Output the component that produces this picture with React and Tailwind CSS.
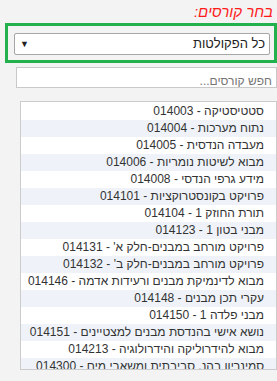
import React from "react";

const courses = [
  "סטטיסטיקה - 014003",
  "נתוח מערכות - 014004",
  "מעבדה הנדסית - 014005",
  "מבוא לשיטות נומריות - 014006",
  "מידע גרפי הנדסי - 014008",
  "פרויקט בקונסטרוקציות - 014101",
  "תורת החוזק 1 - 014104",
  "מבני בטון 1 - 014123",
  "פרויקט מורחב במבנים-חלק א' - 014131",
  "פרויקט מורחב במבנים-חלק ב' - 014132",
  "מבוא לדינמיקת מבנים ורעידות אדמה - 014146",
  "עקרי תכן מבנים - 014148",
  "מבני פלדה 1 - 014150",
  "נושא אישי בהנדסת מבנים למצטיינים - 014151",
  "מבוא להידרוליקה והידרולוגיה - 014213",
  "סמינריון בהנ. סביבתית ומשאבי מים - 014300",
];

const App = () => {
  return (
    <div
      dir="rtl"
      className="w-[277px] h-[381px] bg-[#f3f3f3] overflow-hidden font-['Liberation_Sans',Arial,sans-serif]"
    >
      <div className="h-[23px] leading-[23px] text-[15px] italic text-[#ff1a1a] pr-[4px] text-right">
        בחר קורסים:
      </div>

      <div dir="ltr" className="ml-[5px] w-[272px] h-[40px] border-[3px] border-[#22b14c] pt-[7px] pl-[6px] pr-[4px]">
        <div className="h-[22px] bg-white border border-[#a6a6a6] rounded-[2px] flex items-center justify-between pl-[5px] pr-[4px]">
          <span className="text-[9px] text-[#222] leading-none">▼</span>
          <span dir="rtl" className="text-[13px] text-[#222]">
            כל הפקולטות
          </span>
        </div>
      </div>

      <div dir="ltr" className="mt-[4px] ml-[14px] w-[261px] h-[21px] bg-white border border-[#c9c9c9]">
        <input
          dir="rtl"
          type="text"
          placeholder="חפש קורסים..."
          className="w-full h-full pr-[4px] text-[12px] text-[#222] placeholder:text-[#757575] outline-none bg-transparent"
        />
      </div>

      <div dir="ltr" className="mt-[13px] ml-[14px] w-[257px] h-[269px] bg-white border border-[#cccccc] pt-[1px] overflow-hidden">
        {courses.map((c, i) => (
          <div
            key={c}
            dir="rtl"
            className={
              "h-[17px] leading-[17px] text-[12px] text-[#333] pr-[12px] whitespace-nowrap " +
              (i % 2 === 1 ? "bg-[#eff3f9]" : "bg-white")
            }
          >
            {c}
          </div>
        ))}
      </div>
    </div>
  );
};

export default App;
